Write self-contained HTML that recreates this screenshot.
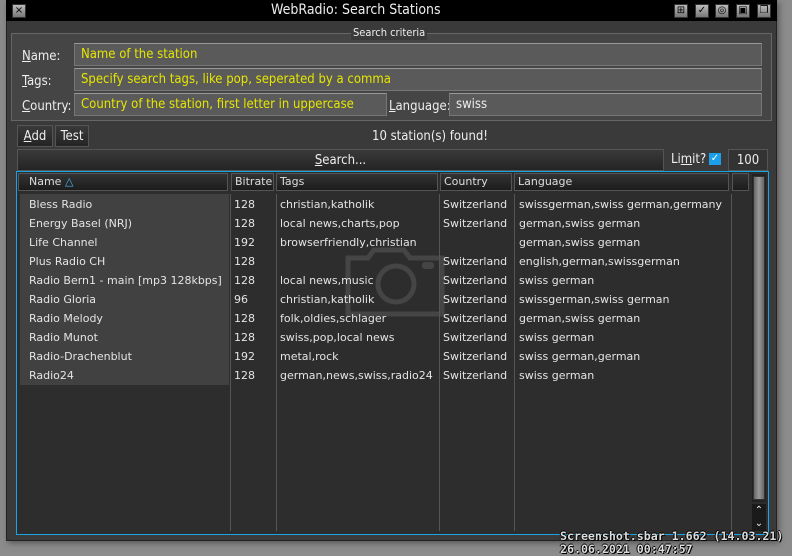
<!DOCTYPE html>
<html><head><meta charset="utf-8"><style>
*{box-sizing:border-box;margin:0;padding:0}
body{width:792px;height:556px;background:#8c8c8c;position:relative;overflow:hidden;font-family:"DejaVu Sans","Liberation Sans",sans-serif;font-size:11px;color:#ddd}
.abs{position:absolute}
.win{left:6px;top:0;width:771px;height:541px;background:#3a3a3a;border:1px solid #222;box-shadow:2px 2px 6px #555}
.title{left:6px;top:0;width:771px;height:21px;background:#000}
.tb{top:4px;width:14px;height:14px;background:linear-gradient(#bbb,#777);border:1px solid #333;color:#000;font-size:10px;line-height:12px;text-align:center}
.fs{left:11px;top:33px;width:761px;height:88px;background:#454545;border:1px solid #666}
.lbl{font-family:"DejaVu Sans Condensed","DejaVu Sans",sans-serif;font-stretch:condensed;font-size:13px;color:#eee}
.inp{background:#5a5a5a;border:1px solid #777;border-top-color:#999;color:#e6e600;font-family:"DejaVu Sans Condensed","DejaVu Sans",sans-serif;font-stretch:condensed;font-size:13px;line-height:22px;padding-left:6px}
.btn{background:linear-gradient(#3a3a3a,#242424);border:1px solid #555;color:#eee;font-family:"DejaVu Sans Condensed","DejaVu Sans",sans-serif;font-stretch:condensed;font-size:13px;text-align:center}
.list{left:16px;top:171px;width:753px;height:364px;background:#2d2d2d;border:1px solid #1aa4e6}
.hd{top:173px;height:18px;background:linear-gradient(#333,#1c1c1c);border:1px solid #555;color:#ddd;line-height:16px;padding-left:3px;font-size:11px}
.vl{top:194px;width:1px;height:337px;background:#555}
.row{left:0;height:19px;line-height:19px;font-size:11px;color:#e4e4e4;white-space:nowrap}
.row span{position:absolute}
.mono{font-family:"DejaVu Sans Mono","Liberation Mono",monospace;font-weight:bold;color:#ddd;font-size:11.6px;text-shadow:1px 1px 0 #000,-1px 0 0 #000,0 -1px 0 #000}
</style></head><body>
<div class="abs win"></div>
<div class="abs title"></div>
<div class="abs lbl" style="left:271px;top:1px;width:160px;font-size:14px;line-height:18px;white-space:nowrap">WebRadio: Search Stations</div>
<div class="abs tb" style="left:12px">×</div>
<div class="abs tb" style="left:674px">⊞</div>
<div class="abs tb" style="left:695px">✓</div>
<div class="abs tb" style="left:715px">◎</div>
<div class="abs tb" style="left:736px">▣</div>
<div class="abs tb" style="left:757px">❐</div>

<div class="abs fs"></div>
<div class="abs lbl" style="left:351px;top:26px;background:#3a3a3a;font-size:11px;padding:0 2px;line-height:14px">Search criteria</div>
<div class="abs lbl" style="left:22px;top:49px"><u>N</u>ame:</div>
<div class="abs inp" style="left:74px;top:43px;width:688px;height:23px">Name of the station</div>
<div class="abs lbl" style="left:22px;top:74px"><u>T</u>ags:</div>
<div class="abs inp" style="left:74px;top:68px;width:688px;height:23px">Specify search tags, like pop, seperated by a comma</div>
<div class="abs lbl" style="left:22px;top:99px"><u>C</u>ountry:</div>
<div class="abs inp" style="left:74px;top:93px;width:313px;height:23px">Country of the station, first letter in uppercase</div>
<div class="abs lbl" style="left:389px;top:99px"><u>L</u>anguage:</div>
<div class="abs inp" style="left:449px;top:93px;width:313px;height:23px;color:#eee">swiss</div>

<div class="abs btn" style="left:17px;top:125px;width:36px;height:22px;line-height:21px"><u>A</u>dd</div>
<div class="abs btn" style="left:55px;top:125px;width:34px;height:22px;line-height:21px">Test</div>
<div class="abs lbl" style="left:372px;top:129px">10 station(s) found!</div>
<div class="abs btn" style="left:17px;top:149px;width:647px;height:22px;line-height:21px"><u>S</u>earch...</div>
<div class="abs lbl" style="left:671px;top:152px">Li<u>m</u>it?</div>
<div class="abs" style="left:709px;top:153px;width:12px;height:12px;background:#1a9fe8;color:#fff;font-size:10px;line-height:12px;text-align:center">✓</div>
<div class="abs btn" style="left:728px;top:149px;width:40px;height:22px;line-height:21px;background:#333">100</div>

<div class="abs list"></div>
<div class="abs hd" style="left:18px;width:210px;padding-left:10px">Name <span style="color:#4ab8f0">△</span></div>
<div class="abs hd" style="left:231px;width:43px">Bitrate</div>
<div class="abs hd" style="left:276px;width:162px">Tags</div>
<div class="abs hd" style="left:440px;width:72px">Country</div>
<div class="abs hd" style="left:514px;width:215px">Language</div>
<div class="abs hd" style="left:732px;width:17px"></div>
<div class="abs" style="left:20px;top:194px;width:209px;height:191px;background:#414141"></div>
<div class="abs vl" style="left:230px"></div>
<div class="abs vl" style="left:276px"></div>
<div class="abs vl" style="left:439px"></div>
<div class="abs vl" style="left:514px"></div>
<div class="abs vl" style="left:731px"></div>
<svg class="abs" style="left:340px;top:244px" width="110" height="80" viewBox="0 0 110 80"><g fill="none" stroke="#555" stroke-opacity=".6" stroke-width="5"><path d="M8 14 h20 l6 -8 h30 l6 8 h32 v56 h-94 z"/><circle cx="56" cy="40" r="18"/></g><rect x="82" y="18" width="12" height="7" rx="3" fill="#555" fill-opacity=".6"/></svg>
<div class="abs" style="left:752px;top:174px;width:14px;height:328px;background:#222"></div>
<div class="abs" style="left:753px;top:176px;width:12px;height:324px;background:linear-gradient(90deg,#666,#9a9a9a,#666);border:1px solid #333"></div>
<div class="abs" style="left:752px;top:504px;width:14px;height:27px;background:#1a1a1a;color:#eee;font-size:10px;text-align:center;line-height:13px">⌃<br>⌄</div>

<div class="abs" style="left:0;top:195px;width:760px">
<div class="row abs" style="top:0"><span style="left:29px">Bless Radio</span><span style="left:234px">128</span><span style="left:280px">christian,katholik</span><span style="left:443px">Switzerland</span><span style="left:519px">swissgerman,swiss german,germany</span></div>
<div class="row abs" style="top:19px"><span style="left:29px">Energy Basel (NRJ)</span><span style="left:234px">128</span><span style="left:280px">local news,charts,pop</span><span style="left:443px">Switzerland</span><span style="left:519px">german,swiss german</span></div>
<div class="row abs" style="top:38px"><span style="left:29px">Life Channel</span><span style="left:234px">192</span><span style="left:280px">browserfriendly,christian</span><span style="left:519px">german,swiss german</span></div>
<div class="row abs" style="top:57px"><span style="left:29px">Plus Radio CH</span><span style="left:234px">128</span><span style="left:443px">Switzerland</span><span style="left:519px">english,german,swissgerman</span></div>
<div class="row abs" style="top:76px"><span style="left:29px">Radio Bern1 - main [mp3 128kbps]</span><span style="left:234px">128</span><span style="left:280px">local news,music</span><span style="left:443px">Switzerland</span><span style="left:519px">swiss german</span></div>
<div class="row abs" style="top:95px"><span style="left:29px">Radio Gloria</span><span style="left:234px">96</span><span style="left:280px">christian,katholik</span><span style="left:443px">Switzerland</span><span style="left:519px">swissgerman,swiss german</span></div>
<div class="row abs" style="top:114px"><span style="left:29px">Radio Melody</span><span style="left:234px">128</span><span style="left:280px">folk,oldies,schlager</span><span style="left:443px">Switzerland</span><span style="left:519px">german,swiss german</span></div>
<div class="row abs" style="top:133px"><span style="left:29px">Radio Munot</span><span style="left:234px">128</span><span style="left:280px">swiss,pop,local news</span><span style="left:443px">Switzerland</span><span style="left:519px">swiss german</span></div>
<div class="row abs" style="top:152px"><span style="left:29px">Radio-Drachenblut</span><span style="left:234px">192</span><span style="left:280px">metal,rock</span><span style="left:443px">Switzerland</span><span style="left:519px">swiss german,german</span></div>
<div class="row abs" style="top:171px"><span style="left:29px">Radio24</span><span style="left:234px">128</span><span style="left:280px">german,news,swiss,radio24</span><span style="left:443px">Switzerland</span><span style="left:519px">swiss german</span></div>
</div>

<div class="abs mono" style="left:560px;top:530px;line-height:13px;white-space:pre">Screenshot.sbar 1.662 (14.03.21)
26.06.2021 00:47:57</div>
</body></html>
